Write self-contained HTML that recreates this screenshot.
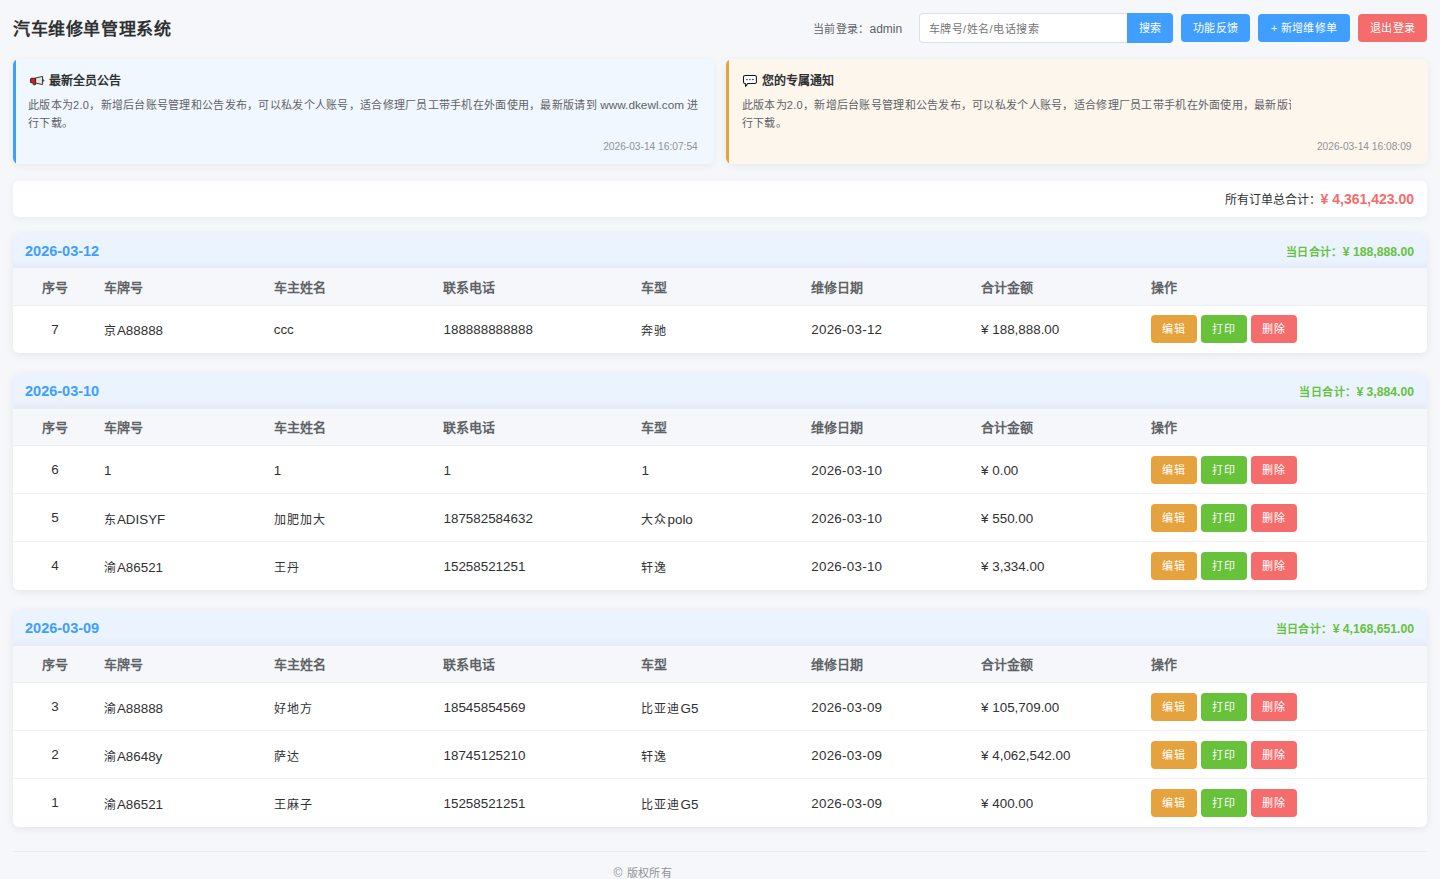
<!DOCTYPE html>
<html lang="zh-CN">
<head>
<meta charset="utf-8">
<title>汽车维修单管理系统</title>
<style>
*{box-sizing:border-box;margin:0;padding:0}
html,body{width:1440px;height:879px;overflow:hidden}
body{background:#f5f7fa;font-family:"Liberation Sans",sans-serif;color:#303133;position:relative}
.abs{position:absolute}
.title{left:13px;top:16px;font-size:17px;letter-spacing:0.6px;font-weight:bold;color:#303133;line-height:28px;white-space:nowrap}
.login i{font-style:normal;font-size:12px;letter-spacing:0}
.login{left:813px;top:19px;font-size:11px;letter-spacing:0.3px;color:#606266;line-height:20px;white-space:nowrap}
.search{left:918.5px;top:12.5px;width:209px;height:30.5px;background:#fff;border:1px solid #dcdfe6;border-right:none;border-radius:4px 0 0 4px}
.search span{position:absolute;left:9px;top:6px;font-size:11px;letter-spacing:0.5px;line-height:18px;color:#757575;white-space:nowrap}
.btn{position:absolute;color:#fff;font-size:11px;letter-spacing:0.25px;text-align:center;white-space:nowrap;border-radius:4px}
.sbtn{left:1127px;top:12.5px;width:46px;height:30.5px;line-height:30px;background:#409eff;border-radius:0 4px 4px 0}
.hb{top:14px;height:28px;line-height:28px}
.blue{background:#409eff}
.red{background:#f56c6c}
.card{top:58.75px;height:105.25px;width:701.25px;border-radius:6px;overflow:hidden;box-shadow:0 2px 8px rgba(0,0,0,.06)}
.c1{left:12.5px;background:#f0f7ff}
.c1:before,.c2:before{content:"";position:absolute;left:0;top:0;bottom:0;width:3px;background:#409eff;border-radius:6px 0 0 6px/6px 0 0 6px}
.c2{left:726.25px;background:#fdf6ec}
.c2:before{background:#e6a23c}
.ct{position:absolute;left:17px;top:12px;font-size:12px;font-weight:bold;line-height:20px;color:#303133;white-space:nowrap}
.ct svg{position:absolute;top:4px;left:0}
.ct b{position:absolute;left:19px;top:0;font-weight:bold}
.cb{position:absolute;left:15.5px;top:37px;width:690px;font-size:11px;letter-spacing:0.28px;line-height:18px;color:#606266}
.l1{white-space:nowrap}.l1 i{font-style:normal;font-size:11.8px;letter-spacing:0}
.clip{overflow:hidden;width:549px;height:40px}
.clip div{width:690px}
.cd{position:absolute;right:16px;top:80px;font-size:10.2px;color:#909399;line-height:16px;white-space:nowrap}
.total{left:12.5px;top:181px;width:1414.5px;height:36px;background:#fff;border-radius:6px;box-shadow:0 2px 8px rgba(0,0,0,.05)}
.total .t{position:absolute;right:13px;top:8px;font-size:12px;line-height:20px;color:#303133;white-space:nowrap}
.total .t b{color:#f56c6c;font-size:14px;font-weight:bold}
.grp{left:12.5px;width:1414.5px;background:#fff;border-radius:6px;box-shadow:0 2px 8px rgba(0,0,0,.075);overflow:hidden}
.gh{position:relative;height:35.5px;background:linear-gradient(to bottom,#ebf3fe 0,#ebf3fe 75%,#e4ecf7 100%)}
.gh .d{position:absolute;left:12.5px;top:8px;font-size:14.5px;font-weight:bold;color:#409eff;line-height:20px}
.gh .s{position:absolute;right:13px;top:9px;font-size:11px;letter-spacing:0.4px;font-weight:bold;color:#67c23a;line-height:20px;white-space:nowrap}
.gh .s i{font-style:normal;font-size:12.2px;letter-spacing:0}
table{border-collapse:collapse;width:1414.5px;table-layout:fixed}
th{height:37px;background:#f5f7fa;font-size:13px;font-weight:bold;color:#606266;text-align:left;padding:0 0 0 6.5px;border-bottom:1px solid #ebeef5;white-space:nowrap}
td{height:48px;font-size:13.4px;color:#303133;text-align:left;padding:1px 0 0 6.5px;border-bottom:1px solid #f0f2f5;white-space:nowrap}
td:nth-child(6){letter-spacing:0.25px}
td:nth-child(8){padding-top:0}
td .z{font-size:12px;letter-spacing:1px}
tr:last-child td{border-bottom:none}
th:first-child,td:first-child{text-align:center;padding:0}
.ob{position:relative;top:0;display:inline-block;width:46px;height:28px;line-height:28px;border-radius:4px;color:#fff;font-size:11px;letter-spacing:0.8px;text-indent:0.8px;text-align:center;margin-right:4px;vertical-align:middle}
.o1{background:#e6a23c}.o2{background:#67c23a}.o3{background:#f56c6c}
.foot{left:12.5px;top:851px;width:1414.5px;height:1px;background:#e9ecf1}
.ftxt i{font-style:normal;font-size:12px;letter-spacing:0;margin-right:1px}
.ftxt{left:613.5px;top:864.5px;font-size:11px;letter-spacing:0.3px;color:#909399;line-height:16px}
</style>
</head>
<body>
<div class="abs title">汽车维修单管理系统</div>
<div class="abs login">当前登录：<i>admin</i></div>
<div class="abs search"><span>车牌号/姓名/电话搜索</span></div>
<div class="btn sbtn">搜索</div>
<div class="btn hb blue" style="left:1181px;width:69px">功能反馈</div>
<div class="btn hb blue" style="left:1258px;width:92px">+ 新增维修单</div>
<div class="btn hb red" style="left:1358px;width:69px">退出登录</div>

<div class="abs card c1">
  <div class="ct"><b>最新全员公告</b></div>
  <div class="cb"><span class="l1">此版本为2.0，新增后台账号管理和公告发布，可以私发个人账号，适合修理厂员工带手机在外面使用，最新版请到 <i>www.dkewl.com</i> 进</span><br>行下载。</div>
  <div class="cd">2026-03-14 16:07:54</div>
</div>
<div class="abs card c2">
  <div class="ct"><b>您的专属通知</b></div>
  <div class="cb clip"><div><span class="l1">此版本为2.0，新增后台账号管理和公告发布，可以私发个人账号，适合修理厂员工带手机在外面使用，最新版请到 <i>www.dkewl.com</i> 进</span><br>行下载。</div></div>
  <div class="cd">2026-03-14 16:08:09</div>
</div>

<svg class="abs" style="left:26px;top:70px" width="24" height="20" viewBox="0 0 24 20">
<path d="M9.4 8 L16.6 6.4 L16.6 14.6 L9.4 13 Z" fill="#e4e4e4" stroke="#3a3a3a" stroke-width="1" stroke-linejoin="round"/>
<path d="M16.8 9.3 L17.9 10.5 L16.8 11.7 Z" fill="#333" stroke="#333" stroke-width="0.8" stroke-linejoin="round"/>
<path d="M5.3 8.3 H9.6 V14.2 Q9.6 14.8 9 14.8 H7.9 Q7.2 14.8 7.1 14.1 L6.9 12.8 H5.3 Q4.5 12.8 4.5 12 V9.1 Q4.5 8.3 5.3 8.3 Z" fill="#e8141f" stroke="#2a2a2a" stroke-width="1" stroke-linejoin="round"/>
</svg>
<svg class="abs" style="left:738px;top:70px" width="24" height="20" viewBox="0 0 24 20">
<path d="M7 5.4 H16.9 Q18.4 5.4 18.4 6.9 V11.9 Q18.4 13.4 16.9 13.4 H9.8 L7.6 16.4 L7.3 13.4 H7 Q5.5 13.4 5.5 11.9 V6.9 Q5.5 5.4 7 5.4 Z" fill="#fff" stroke="#151515" stroke-width="1.05" stroke-linejoin="round"/>
<ellipse cx="8.9" cy="9.5" rx="0.95" ry="0.7" fill="#555"/><ellipse cx="11.9" cy="9.5" rx="0.95" ry="0.7" fill="#555"/><ellipse cx="14.9" cy="9.5" rx="0.95" ry="0.7" fill="#444"/>
</svg>
<div class="abs total"><div class="t">所有订单总合计：<b>¥ 4,361,423.00</b></div></div>

<!--GROUPS-->
<div class="abs grp" style="top:232.5px">
<div class="gh"><span class="d">2026-03-12</span><span class="s">当日合计：<i>¥ 188,888.00</i></span></div>
<table><colgroup><col style="width:84.9px"><col style="width:169.8px"><col style="width:169.8px"><col style="width:198px"><col style="width:169.8px"><col style="width:169.8px"><col style="width:169.8px"><col></colgroup>
<tr><th>序号</th><th>车牌号</th><th>车主姓名</th><th>联系电话</th><th>车型</th><th>维修日期</th><th>合计金额</th><th>操作</th></tr>
<tr><td>7</td><td><span class="z">京</span>A88888</td><td>ccc</td><td>188888888888</td><td><span class="z">奔驰</span></td><td>2026-03-12</td><td>¥ 188,888.00</td><td><span class="ob o1">编辑</span><span class="ob o2">打印</span><span class="ob o3">删除</span></td></tr>
</table></div>
<div class="abs grp" style="top:373px">
<div class="gh"><span class="d">2026-03-10</span><span class="s">当日合计：<i>¥ 3,884.00</i></span></div>
<table><colgroup><col style="width:84.9px"><col style="width:169.8px"><col style="width:169.8px"><col style="width:198px"><col style="width:169.8px"><col style="width:169.8px"><col style="width:169.8px"><col></colgroup>
<tr><th>序号</th><th>车牌号</th><th>车主姓名</th><th>联系电话</th><th>车型</th><th>维修日期</th><th>合计金额</th><th>操作</th></tr>
<tr><td>6</td><td>1</td><td>1</td><td>1</td><td>1</td><td>2026-03-10</td><td>¥ 0.00</td><td><span class="ob o1">编辑</span><span class="ob o2">打印</span><span class="ob o3">删除</span></td></tr>
<tr><td>5</td><td><span class="z">东</span>ADISYF</td><td><span class="z">加肥加大</span></td><td>187582584632</td><td><span class="z">大众</span>polo</td><td>2026-03-10</td><td>¥ 550.00</td><td><span class="ob o1">编辑</span><span class="ob o2">打印</span><span class="ob o3">删除</span></td></tr>
<tr><td>4</td><td><span class="z">渝</span>A86521</td><td><span class="z">王丹</span></td><td>15258521251</td><td><span class="z">轩逸</span></td><td>2026-03-10</td><td>¥ 3,334.00</td><td><span class="ob o1">编辑</span><span class="ob o2">打印</span><span class="ob o3">删除</span></td></tr>
</table></div>
<div class="abs grp" style="top:610px">
<div class="gh"><span class="d">2026-03-09</span><span class="s">当日合计：<i>¥ 4,168,651.00</i></span></div>
<table><colgroup><col style="width:84.9px"><col style="width:169.8px"><col style="width:169.8px"><col style="width:198px"><col style="width:169.8px"><col style="width:169.8px"><col style="width:169.8px"><col></colgroup>
<tr><th>序号</th><th>车牌号</th><th>车主姓名</th><th>联系电话</th><th>车型</th><th>维修日期</th><th>合计金额</th><th>操作</th></tr>
<tr><td>3</td><td><span class="z">渝</span>A88888</td><td><span class="z">好地方</span></td><td>18545854569</td><td><span class="z">比亚迪</span>G5</td><td>2026-03-09</td><td>¥ 105,709.00</td><td><span class="ob o1">编辑</span><span class="ob o2">打印</span><span class="ob o3">删除</span></td></tr>
<tr><td>2</td><td><span class="z">渝</span>A8648y</td><td><span class="z">萨达</span></td><td>18745125210</td><td><span class="z">轩逸</span></td><td>2026-03-09</td><td>¥ 4,062,542.00</td><td><span class="ob o1">编辑</span><span class="ob o2">打印</span><span class="ob o3">删除</span></td></tr>
<tr><td>1</td><td><span class="z">渝</span>A86521</td><td><span class="z">王麻子</span></td><td>15258521251</td><td><span class="z">比亚迪</span>G5</td><td>2026-03-09</td><td>¥ 400.00</td><td><span class="ob o1">编辑</span><span class="ob o2">打印</span><span class="ob o3">删除</span></td></tr>
</table></div>
<!--/GROUPS-->

<div class="abs foot"></div>
<div class="abs ftxt"><i>©</i> 版权所有</div>
</body>
</html>
